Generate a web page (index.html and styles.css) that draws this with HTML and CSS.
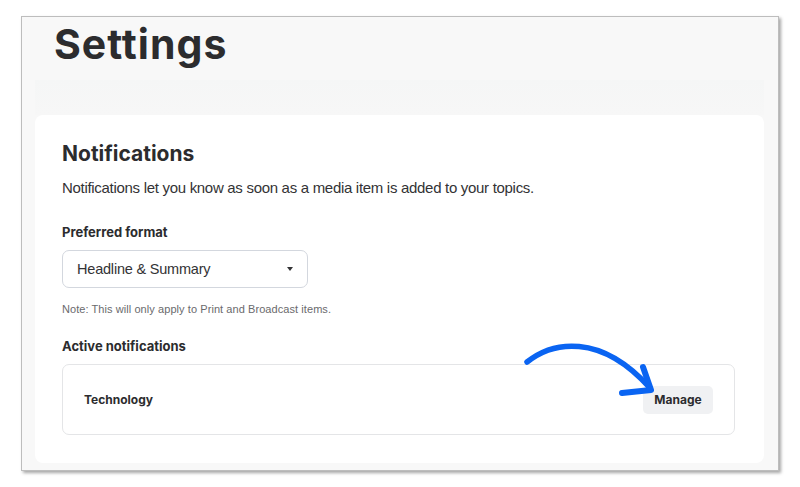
FILE: index.html
```html
<!DOCTYPE html>
<html lang="en">
<head>
<meta charset="utf-8">
<title>Settings</title>
<link rel="stylesheet" href="styles.css">
</head>
<body>
<div class="frame">
  <header class="page-header">
    <h1 class="page-title">Settings</h1>
  </header>
  <div class="content">
    <div class="header-shade"></div>
    <section class="card">
      <h2 class="card-title">Notifications</h2>
      <p class="card-desc">Notifications let you know as soon as a media item is added to your topics.</p>

      <div class="field-label">Preferred format</div>
      <div class="select">
        <span class="select-value">Headline &amp; Summary</span>
        <span class="select-caret"></span>
      </div>
      <p class="note">Note: This will only apply to Print and Broadcast items.</p>

      <div class="field-label active-label">Active notifications</div>
      <div class="topic-row">
        <span class="topic-name">Technology</span>
        <button class="manage-btn">Manage</button>
      </div>
    </section>
  </div>
</div>
<svg class="annotation" width="800" height="487" viewBox="0 0 800 487" aria-hidden="true">
  <path d="M527 362 C 552 342, 600 332, 650 388" fill="none" stroke="#0a64f2" stroke-width="5.5" stroke-linecap="round"/>
  <path d="M643 367 L651 390 L622 393" fill="none" stroke="#0a64f2" stroke-width="6" stroke-linecap="round" stroke-linejoin="round"/>
</svg>
</body>
</html>
```

FILE: styles.css
```css
* { box-sizing: border-box; }

html, body {
  margin: 0;
  padding: 0;
  background: #ffffff;
  font-family: Inter, "Liberation Sans", sans-serif;
  color: #2f2f31;
}

body {
  width: 800px;
  height: 487px;
  overflow: hidden;
  padding: 16px 0 0 21px;
}

.frame {
  width: 758px;
  height: 455px;
  background: #f8f8f8;
  border: 1px solid #bdbdbd;
  box-shadow: 2px 2px 3px rgba(0, 0, 0, 0.35);
  overflow: hidden;
}

.page-header {
  height: 63px;
  padding: 3px 0 0 32px;
}

.page-title {
  margin: 0;
  font-size: 41px;
  line-height: 48px;
  font-weight: 700;
  letter-spacing: 1px;
  color: #2c2c2e;
}

.content {
  margin: 0 14px 0 13px;
}

.header-shade {
  height: 35px;
  background: linear-gradient(#f5f6f6, #f7f7f7);
}

.card {
  background: #ffffff;
  border-radius: 8px;
  height: 348px;
  padding: 26px 29px 0 27px;
}

.card-title {
  margin: 0;
  font-size: 21px;
  line-height: 26px;
  font-weight: 700;
  color: #2c2c2e;
}

.card-desc {
  margin: 11px 0 0 0;
  font-family: "Liberation Sans", Arial, sans-serif;
  font-size: 15px;
  line-height: 20px;
  letter-spacing: -0.3px;
  color: #333335;
}

.field-label {
  margin-top: 26px;
  font-size: 13px;
  line-height: 16px;
  font-weight: 700;
  color: #2c2c2e;
}

.select {
  margin-top: 10px;
  width: 246px;
  height: 38px;
  border: 1px solid #d3d7de;
  border-radius: 7px;
  display: flex;
  align-items: center;
  justify-content: space-between;
  padding: 0 14px 0 14px;
}

.select-value {
  font-family: "Liberation Sans", Arial, sans-serif;
  font-size: 14.5px;
  letter-spacing: -0.2px;
  color: #333335;
}

.select-caret {
  width: 0;
  height: 0;
  border-left: 3.5px solid transparent;
  border-right: 3.5px solid transparent;
  border-top: 4px solid #333335;
}

.note {
  margin: 14px 0 0 0;
  font-family: "Liberation Sans", Arial, sans-serif;
  font-size: 11px;
  line-height: 14px;
  letter-spacing: 0.07px;
  color: #6a6a6d;
}

.active-label {
  margin-top: 22px;
}

.topic-row {
  margin-top: 10px;
  height: 71px;
  border: 1px solid #e4e5e7;
  border-radius: 7px;
  display: flex;
  align-items: center;
  justify-content: space-between;
  padding: 0 21px 0 21px;
}

.topic-name {
  font-size: 12px;
  font-weight: 700;
  color: #2c2c2e;
}

.manage-btn {
  width: 70px;
  height: 28px;
  border: none;
  border-radius: 5px;
  background: #f0f1f3;
  font-family: inherit;
  font-size: 12px;
  font-weight: 700;
  color: #2c2c2e;
  padding: 0;
}

.annotation {
  position: absolute;
  left: 0;
  top: 0;
  pointer-events: none;
}
```
